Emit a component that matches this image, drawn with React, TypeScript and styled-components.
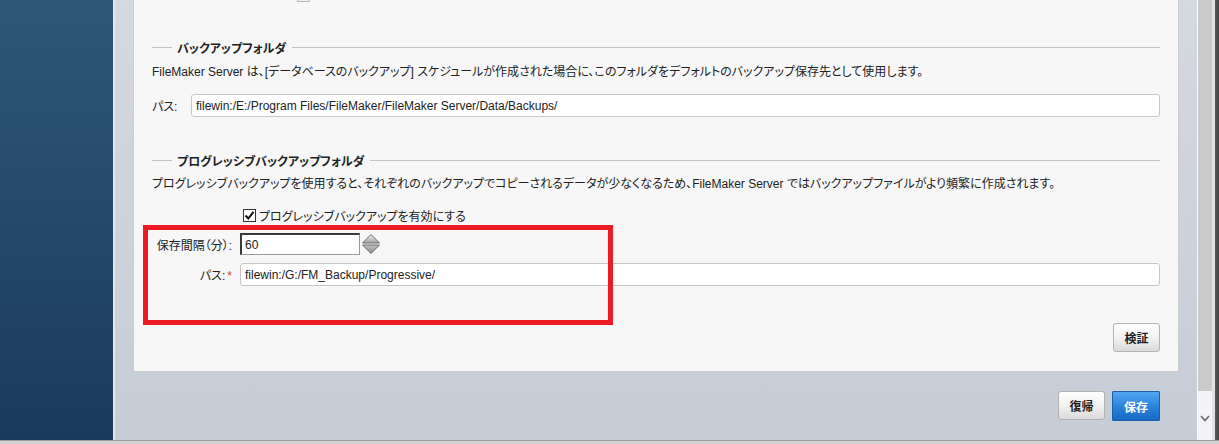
import React from 'react';
import styled, { createGlobalStyle } from 'styled-components';

const GlobalStyle = createGlobalStyle`
  html, body {
    margin: 0;
    padding: 0;
    overflow: hidden;
    background: #c8ced6;
  }
  * {
    box-sizing: border-box;
  }
`;

const FONT = `"Liberation Sans", "Noto Sans CJK JP", sans-serif`;

const Frame = styled.div`
  width: 1219px;
  height: 444px;
  display: flex;
  flex-direction: column;
  font-family: ${FONT};
  font-size: 12px;
  color: #222;
  font-feature-settings: 'palt';
`;

const Body = styled.div`
  flex: 1;
  display: flex;
  min-height: 0;
`;

const Sidebar = styled.div`
  width: 115px;
  background: linear-gradient(180deg, #2f5677 0%, #24496b 50%, #1a3a5b 100%);
  border-right: 2px solid #e4e8ec;
`;

const Main = styled.div`
  flex: 1;
  display: flex;
  flex-direction: column;
  background: linear-gradient(180deg, #d4dae0 0%, #d2d5de 20%, #c6cdd6 100%);
`;

const Panel = styled.div`
  position: relative;
  margin-left: 18px;
  width: 1046px;
  background: #f7f7f7;
  border: 1px solid #cdcdcd;
  border-top: none;
  padding: 0 18px 19px 18px;
  display: flex;
  flex-direction: column;
`;

const TopRow = styled.div`
  margin-top: -11px;
  height: 13px;
  padding-left: 145px;
  display: flex;
  align-items: flex-end;
  gap: 6px;
  color: #a8a8a8;
  line-height: 13px;
`;

const FadedBox = styled.span`
  width: 13px;
  height: 13px;
  border: 1px solid #b8b8b8;
  background: #eeeeee;
  flex: none;
`;

const Legend = styled.div<{ $top: number }>`
  margin-top: ${(p) => p.$top}px;
  height: 16px;
  display: flex;
  align-items: center;
  gap: 6px;
  font-weight: bold;
  &::before {
    content: '';
    width: 20px;
    height: 1px;
    background: #c2c2ca;
    margin-right: -1px;
  }
  &::after {
    content: '';
    flex: 1;
    height: 1px;
    background: #c2c2ca;
  }
`;

const Desc = styled.div<{ $top: number }>`
  margin-top: ${(p) => p.$top}px;
  line-height: 16px;
  white-space: nowrap;
`;

const FieldRow = styled.div<{ $top: number }>`
  margin-top: ${(p) => p.$top}px;
  display: flex;
  align-items: center;
`;

const Label = styled.div<{ $width: number; $right?: boolean }>`
  width: ${(p) => p.$width}px;
  flex: none;
  text-align: ${(p) => (p.$right ? 'right' : 'left')};
  padding-right: ${(p) => (p.$right ? 8 : 0)}px;
  white-space: nowrap;
`;

const Required = styled.span`
  color: #e03a2a;
  margin-left: 2px;
`;

const TextInput = styled.div`
  flex: 1;
  height: 23px;
  background: #fff;
  border: 1px solid #c6c6c6;
  border-radius: 3px;
  padding-left: 4px;
  display: flex;
  align-items: center;
  white-space: nowrap;
`;

const CheckRow = styled.div`
  margin-top: 15px;
  height: 16px;
  padding-left: 91px;
  display: flex;
  align-items: center;
  gap: 3px;
`;

const CheckBox = styled.span`
  width: 13px;
  height: 13px;
  border: 1px solid #333;
  background: #fff;
  display: flex;
  align-items: center;
  justify-content: center;
  flex: none;
`;

const Spinner = styled.div`
  display: flex;
  align-items: center;
  gap: 1px;
`;

const SpinInput = styled.div`
  width: 120px;
  height: 22px;
  background: #fff;
  border-style: solid;
  border-width: 2px 1px 1px 2px;
  border-color: #3a3a3a #9a9a9a #9a9a9a #3a3a3a;
  padding-left: 3px;
  display: flex;
  align-items: center;
`;

const ButtonRow = styled.div<{ $top: number }>`
  margin-top: ${(p) => p.$top}px;
  display: flex;
  justify-content: flex-end;
  gap: 7px;
`;

const Button = styled.button<{ $primary?: boolean }>`
  width: ${(p) => (p.$primary ? 48 : 47)}px;
  height: ${(p) => (p.$primary ? 30 : 29)}px;
  font-family: ${FONT};
  font-size: 12px;
  font-weight: bold;
  padding: 0;
  border-radius: ${(p) => (p.$primary ? 1 : 3)}px;
  border: 1px solid ${(p) => (p.$primary ? '#1b5fa8' : '#b2b2b2')};
  color: ${(p) => (p.$primary ? '#fff' : '#222')};
  background: ${(p) =>
    p.$primary
      ? 'linear-gradient(180deg, #52a6f0 0%, #2c84db 50%, #166ac4 100%)'
      : 'linear-gradient(180deg, #fefefe 0%, #f2f2f2 50%, #dadada 100%)'};
`;

const Highlight = styled.div`
  position: absolute;
  left: 9px;
  top: 225px;
  width: 470px;
  height: 100px;
  border: 5px solid #ed1c24;
  pointer-events: none;
`;

const Footer = styled.div`
  margin-top: 19px;
  padding-right: 37px;
  display: flex;
  justify-content: flex-end;
  gap: 7px;
`;

const Scrollbar = styled.div`
  width: 22px;
  display: flex;
  border-left: 1px solid #fafafa;
`;

const Track = styled.div`
  width: 14px;
  display: flex;
  flex-direction: column;
`;

const Thumb = styled.div`
  height: 391px;
  background: #cacaca;
`;

const TrackRest = styled.div`
  flex: 1;
  background: #f5f3f7;
  display: flex;
  align-items: center;
  justify-content: center;
  padding-top: 6px;
`;

const ScrollEdge = styled.div`
  flex: 1;
  background: linear-gradient(90deg, #e2e2e2 0%, #e2e2e2 40%, #5a5a5a 45%, #3f3f3f 100%);
`;

const BottomStrip = styled.div`
  height: 4px;
  border-top: 1px solid #9c9c9c;
  background: #d4d4d4;
`;

function Check() {
  return (
    <svg width="11" height="11" viewBox="0 0 11 11">
      <path d="M1.5 5.5 L4.3 8.5 L9.5 1.8" fill="none" stroke="#111" strokeWidth="2" />
    </svg>
  );
}

function SpinArrows() {
  return (
    <svg width="20" height="22" viewBox="0 0 20 22">
      <defs>
        <linearGradient id="spinUp" x1="0" y1="0" x2="0" y2="1">
          <stop offset="0" stopColor="#f2f2f2" />
          <stop offset="1" stopColor="#a4a4a4" />
        </linearGradient>
        <linearGradient id="spinDown" x1="0" y1="0" x2="0" y2="1">
          <stop offset="0" stopColor="#c4c4c4" />
          <stop offset="1" stopColor="#888" />
        </linearGradient>
      </defs>
      <path d="M1.5 10 L10 1.5 L18.5 10 Z" fill="url(#spinUp)" stroke="#6a6a6a" strokeWidth="1" strokeLinejoin="round" />
      <path d="M1.5 12 L18.5 12 L10 20.5 Z" fill="url(#spinDown)" stroke="#6a6a6a" strokeWidth="1" strokeLinejoin="round" />
    </svg>
  );
}

function Chevron() {
  return (
    <svg width="10" height="7" viewBox="0 0 10 7">
      <path d="M1 1 L5 5.5 L9 1" fill="none" stroke="#6a6a6a" strokeWidth="1.6" />
    </svg>
  );
}

export default function App() {
  return (
    <>
      <GlobalStyle />
      <Frame>
        <Body>
          <Sidebar />
          <Main>
            <Panel>
              <TopRow>
                <FadedBox />
                <span>バックアップの整合性を検証する</span>
              </TopRow>

              <Legend $top={37}>バックアップフォルダ</Legend>
              <Desc $top={9}>
                FileMaker Server は、[データベースのバックアップ] スケジュールが作成された場合に、このフォルダをデフォルトのバックアップ保存先として使用します。
              </Desc>
              <FieldRow $top={14}>
                <Label $width={39}>パス:</Label>
                <TextInput>filewin:/E:/Program Files/FileMaker/FileMaker Server/Data/Backups/</TextInput>
              </FieldRow>

              <Legend $top={35}>プログレッシブバックアップフォルダ</Legend>
              <Desc $top={8}>
                プログレッシブバックアップを使用すると、それぞれのバックアップでコピーされるデータが少なくなるため、FileMaker Server ではバックアップファイルがより頻繁に作成されます。
              </Desc>
              <CheckRow>
                <CheckBox>
                  <Check />
                </CheckBox>
                <span>プログレッシブバックアップを有効にする</span>
              </CheckRow>
              <FieldRow $top={10}>
                <Label $width={88} $right>
                  保存間隔（分）:
                </Label>
                <Spinner>
                  <SpinInput>60</SpinInput>
                  <SpinArrows />
                </Spinner>
              </FieldRow>
              <FieldRow $top={8}>
                <Label $width={88} $right>
                  パス:<Required>*</Required>
                </Label>
                <TextInput>filewin:/G:/FM_Backup/Progressive/</TextInput>
              </FieldRow>

              <ButtonRow $top={37}>
                <Button>検証</Button>
              </ButtonRow>

              <Highlight />
            </Panel>
            <Footer>
              <Button>復帰</Button>
              <Button $primary>保存</Button>
            </Footer>
          </Main>
          <Scrollbar>
            <Track>
              <Thumb />
              <TrackRest>
                <Chevron />
              </TrackRest>
            </Track>
            <ScrollEdge />
          </Scrollbar>
        </Body>
        <BottomStrip />
      </Frame>
    </>
  );
}
